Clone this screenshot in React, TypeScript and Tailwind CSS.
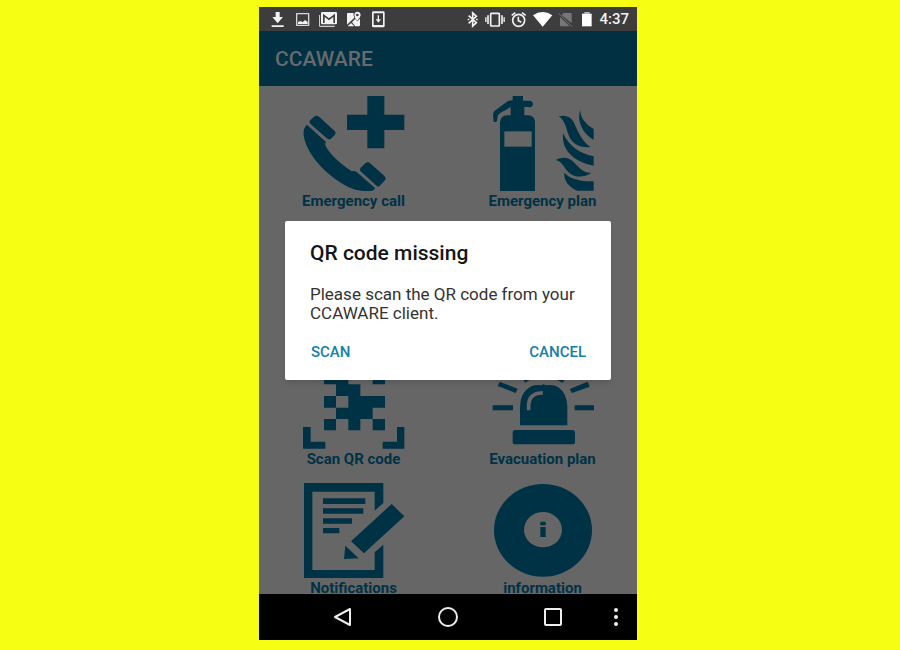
import React from "react";

type GlyphProps = {
  box: string;
  className: string;
  children: React.ReactNode;
};

function Glyph({ box, className, children }: GlyphProps) {
  return (
    <svg viewBox={box} className={className} fill="currentColor" aria-hidden="true">
      {children}
    </svg>
  );
}

const left = "h-6 w-[25px] shrink-0";
const right = "h-6 w-[23px] shrink-0";

function StatusBar() {
  return (
    <div className="flex h-6 shrink-0 items-center justify-between bg-[#3d3d3d] pr-2 pl-[6px] text-[#f2f2f2]">
      <div className="flex">
        <Glyph box="30 18 75 72" className={left}>
          <path d="M62 33H74V48H84L68 67L52 48H62ZM50 73H86V78H50Z" />
        </Glyph>
        <Glyph box="105 18 75 72" className={left}>
          <path
            fillRule="evenodd"
            d="M125 36H161Q163 36 163 38V73Q163 75 161 75H125Q123 75 123 73V38Q123 36 125 36ZM127 40V71H159V40Z"
            opacity=".85"
          />
          <path d="M129 69V63L137 60L143 64L150 57L158 63V69Z" />
        </Glyph>
        <Glyph box="180 18 75 72" className={left}>
          <path d="M192 42H195V74H239V78H196Q192 78 192 74Z" opacity=".8" />
          <path
            fillRule="evenodd"
            d="M202 33H242Q246 33 246 37V66Q246 70 242 70H202Q198 70 198 66V37Q198 33 202 33ZM204 38V66H209V48L222 58L235 48V66H240V38L222 52Z"
          />
        </Glyph>
        <Glyph box="255 18 75 72" className={left}>
          <path d="M277 36H296Q294 43 298 50L276 71V38Z" />
          <path d="M301 53L307 61L315 53V73Q315 76 312 76H301L291 64Z" />
          <path d="M288 66L298 76H278Z" />
          <path
            fillRule="evenodd"
            d="M307 32Q317 33 317 43Q316 50 307 59Q298 50 298 43Q298 33 307 32ZM307 38A4 4 0 1 0 307 46A4 4 0 1 0 307 38Z"
          />
        </Glyph>
        <Glyph box="330 18 75 72" className={left}>
          <path
            fillRule="evenodd"
            d="M355 31H385Q389 31 389 35V75Q389 79 385 79H355Q351 79 351 75V35Q351 31 355 31ZM356 37V72H384V37Z"
          />
          <path d="M368 43H372V55H378L370 65L362 55H368Z" />
        </Glyph>
      </div>
      <div className="flex items-center">
        <Glyph box="50 18 69 72" className={right}>
          <path
            d="M73 44L96 65L85 75V36L96 46L73 67"
            fill="none"
            stroke="currentColor"
            strokeWidth="5"
          />
          <path d="M70 53H75V58H70ZM95 53H100V58H95Z" />
        </Glyph>
        <Glyph box="119 18 69 72" className={right}>
          <rect x="139" y="37" width="26" height="38" rx="2" fill="none" stroke="currentColor" strokeWidth="5" />
          <path d="M128 43H134V69H128ZM170 43H176V69H170ZM122 49H127V63H122ZM177 49H182V63H177Z" opacity=".8" />
        </Glyph>
        <Glyph box="188 18 69 72" className={right}>
          <g fill="none" stroke="currentColor" strokeWidth="5">
            <circle cx="223" cy="58" r="18" />
            <path d="M222 47V59L231 64M202 43L213 35M244 43L233 35" />
          </g>
        </Glyph>
        <Glyph box="257 18 69 72" className={right}>
          <path d="M266 43Q280 33 295 33T324 43L295 77Z" fill="#fff" />
        </Glyph>
        <Glyph box="326 18 69 72" className={right}>
          <path d="M358 36H379Q382 36 382 39V67L352 42ZM347 48L376 76H350Q347 76 347 73Z" fill="#777" />
          <path d="M343 37L383 77" stroke="#777" strokeWidth="3" />
        </Glyph>
        <Glyph box="395 18 69 72" className={right}>
          <path d="M413 38H442V76H413Z" fill="#fff" />
          <path d="M420 33H436V38H420Z" opacity=".7" />
        </Glyph>
        <span className="text-[15px] leading-5 font-medium">4:37</span>
      </div>
    </div>
  );
}

type Tile = { label: string; box: string; row: string; art: React.ReactNode };

const tiles: Tile[] = [
  {
    label: "Emergency call",
    box: "38 33 306 288",
    row: "row-start-1",
    art: (
      <>
        <path d="M231 33H282V89H342V135H282V190H231V135H170V89H231Z" />
        <path d="M58 107L71 95Q80 89 88 97L132 137Q139 144 133 150L122 161Q117 166 109 160L58 115Z" />
        <path d="M50 119L107 171Q102 178 108 187C126 217 158 242 184 259Q192 256 200 262L254 309Q252 317 240 318C205 320 181 313 149 292C105 263 67 224 48 180C37 153 36 130 50 119Z" />
        <path d="M210 249L225 235Q233 228 241 236L280 271Q289 279 284 286L267 304Q261 306 256 300L209 257Z" />
      </>
    ),
  },
  {
    label: "Emergency plan",
    box: "35 33 306 288",
    row: "row-start-1",
    art: (
      <>
        <path d="M97 33H128V47H150Q158 49 158 57Q157 66 149 67L132 65V91H143Q164 91 164 114V318H59V114Q60 92 81 91H91V66L72 77Q55 84 52 93L50 107Q47 114 40 110L38 91Q38 79 49 73L80 50Q86 46 97 46Z" />
        <path d="M72 139H154V185H72Z" fill="#666666" />
        <path d="M235 94C254 89 270 94 280 111C292 139 306 170 330 186C302 190 275 178 265 151C258 132 254 105 235 94Z" />
        <path d="M300 75C300 101 318 119 340 132V164C312 150 287 111 300 75Z" />
        <path d="M248 144C266 185 302 207 340 214V242C292 233 242 203 248 144Z" />
        <path d="M226 225C247 213 268 216 285 236C302 255 315 263 333 264C310 279 284 278 266 263C251 250 247 230 226 225Z" />
        <path d="M252 263C269 282 303 290 340 289V317H291C268 308 249 287 252 263Z" />
      </>
    ),
  },
  {
    label: "Scan QR code",
    box: "38 -63 306 288",
    row: "row-start-3",
    art: (
      <path d="M101 -9H174V28H210V63H284V98H247V132H284V166H247V132H210V166H174V132H137V166H101V132H137V98H174V63H137V98H101V63H137V28H101ZM247 -9H284V28H247ZM38 156H61V200H105V221H38ZM320 156H342V221H277V200H320Z" />
    ),
  },
  {
    label: "Evacuation plan",
    box: "35 -63 306 288",
    row: "row-start-3",
    art: (
      <>
        <path d="M119 151V96Q119 53 152 34Q167 28 182 31L190 28L197 31Q219 27 234 37Q260 55 261 96V151Z" />
        <rect x="97" y="165" width="187" height="43" rx="8" />
        <path d="M37 91H98V106H37ZM283 91H341V106H283ZM58 20L112 41L106 54L52 33ZM322 20L328 35L275 54L268 42ZM122 -4L134 -8L147 16L134 23ZM246 -4L259 3L247 23L232 16Z" />
        <path d="M145 100V88Q147 56 182 54" fill="none" stroke="#666666" strokeWidth="11" strokeLinecap="square" />
      </>
    ),
  },
  {
    label: "Notifications",
    box: "38 24 306 288",
    row: "row-start-4",
    art: (
      <>
        <path d="M41 24H279V84L253 107V50H66V285H253V232L279 209V309H41Z" />
        <path d="M98 70H225V87H98ZM98 100H219V116H98ZM98 130H185V146H98ZM98 159H147V175H98Z" />
        <path d="M304 87L342 124L221 235L182 199ZM165 212L205 250L161 252Z" />
      </>
    ),
  },
  {
    label: "information",
    box: "35 24 306 288",
    row: "row-start-4",
    art: (
      <>
        <ellipse cx="188" cy="166" rx="147" ry="139" />
        <ellipse cx="188" cy="164" rx="57" ry="53" fill="#666666" />
        <path d="M180 140H196V151H180ZM180 156H196V186H180Z" />
      </>
    ),
  },
];

function Dialog() {
  return (
    <div className="absolute inset-0 flex items-center px-[26px]">
      <div
        role="dialog"
        aria-labelledby="dialog-title"
        className="w-full rounded-xs bg-white px-[25px] pt-5 pb-4 shadow-md"
      >
        <h2 id="dialog-title" className="text-[21px] leading-6 font-medium text-[#151515]">
          QR code missing
        </h2>
        <p className="mt-5 text-[17px] leading-[19px] text-[#333333]">
          Please scan the QR code from your CCAWARE client.
        </p>
        <div className="mt-[17px] flex justify-between text-[15px] leading-6 font-medium text-[#1380a8]">
          <button type="button" className="px-px">SCAN</button>
          <button type="button">CANCEL</button>
        </div>
      </div>
    </div>
  );
}

function NavBar() {
  const button = "flex items-center justify-center";
  return (
    <nav className="flex h-[46px] shrink-0 items-center bg-black pr-[11px] pl-[31px] text-[#eeeeee]">
      <div className="grid flex-1 grid-cols-3">
        <button type="button" aria-label="Back" className={button}>
          <Glyph box="0 0 20 20" className="size-5">
            <path d="M17 2V18L2 10Z" fill="none" stroke="currentColor" strokeWidth="2" strokeLinejoin="round" />
          </Glyph>
        </button>
        <button type="button" aria-label="Home" className={button}>
          <Glyph box="0 0 20 20" className="size-5">
            <circle cx="10" cy="10" r="9" fill="none" stroke="currentColor" strokeWidth="2" />
          </Glyph>
        </button>
        <button type="button" aria-label="Recent apps" className={button}>
          <Glyph box="0 0 20 20" className="size-5">
            <rect x="2" y="2" width="16" height="16" rx="1" fill="none" stroke="currentColor" strokeWidth="2" />
          </Glyph>
        </button>
      </div>
      <button type="button" aria-label="More" className={button}>
        <Glyph box="0 0 20 20" className="size-5">
          <circle cx="10" cy="3" r="2" />
          <circle cx="10" cy="10" r="2" />
          <circle cx="10" cy="17" r="2" />
        </Glyph>
      </button>
    </nav>
  );
}

export default function App() {
  return (
    <div className="flex h-screen justify-center bg-[#f6ff13] pt-[7px] pr-1 pb-[10px] font-[Roboto,sans-serif]">
      <div className="flex w-[42%] min-w-[378px] flex-col">
        <div className="relative flex min-h-0 flex-1 flex-col">
          <StatusBar />
          <header className="flex h-[55px] shrink-0 items-center bg-[#003042] px-4">
            <h1 className="text-[21px] leading-7 font-medium text-[#666b6e]">CCAWARE</h1>
          </header>
          <main className="grid min-h-0 flex-1 auto-rows-[129px] grid-cols-2 overflow-hidden bg-[#666666] pt-[10px] text-[#003245]">
            {tiles.map((tile) => (
              <button
                key={tile.label}
                type="button"
                className={`flex flex-col items-center ${tile.row}`}
              >
                <Glyph box={tile.box} className="h-24 w-[102px] shrink-0">
                  {tile.art}
                </Glyph>
                <span className="text-[15px] leading-[18px] font-bold">{tile.label}</span>
              </button>
            ))}
          </main>
          <Dialog />
        </div>
        <NavBar />
      </div>
    </div>
  );
}
